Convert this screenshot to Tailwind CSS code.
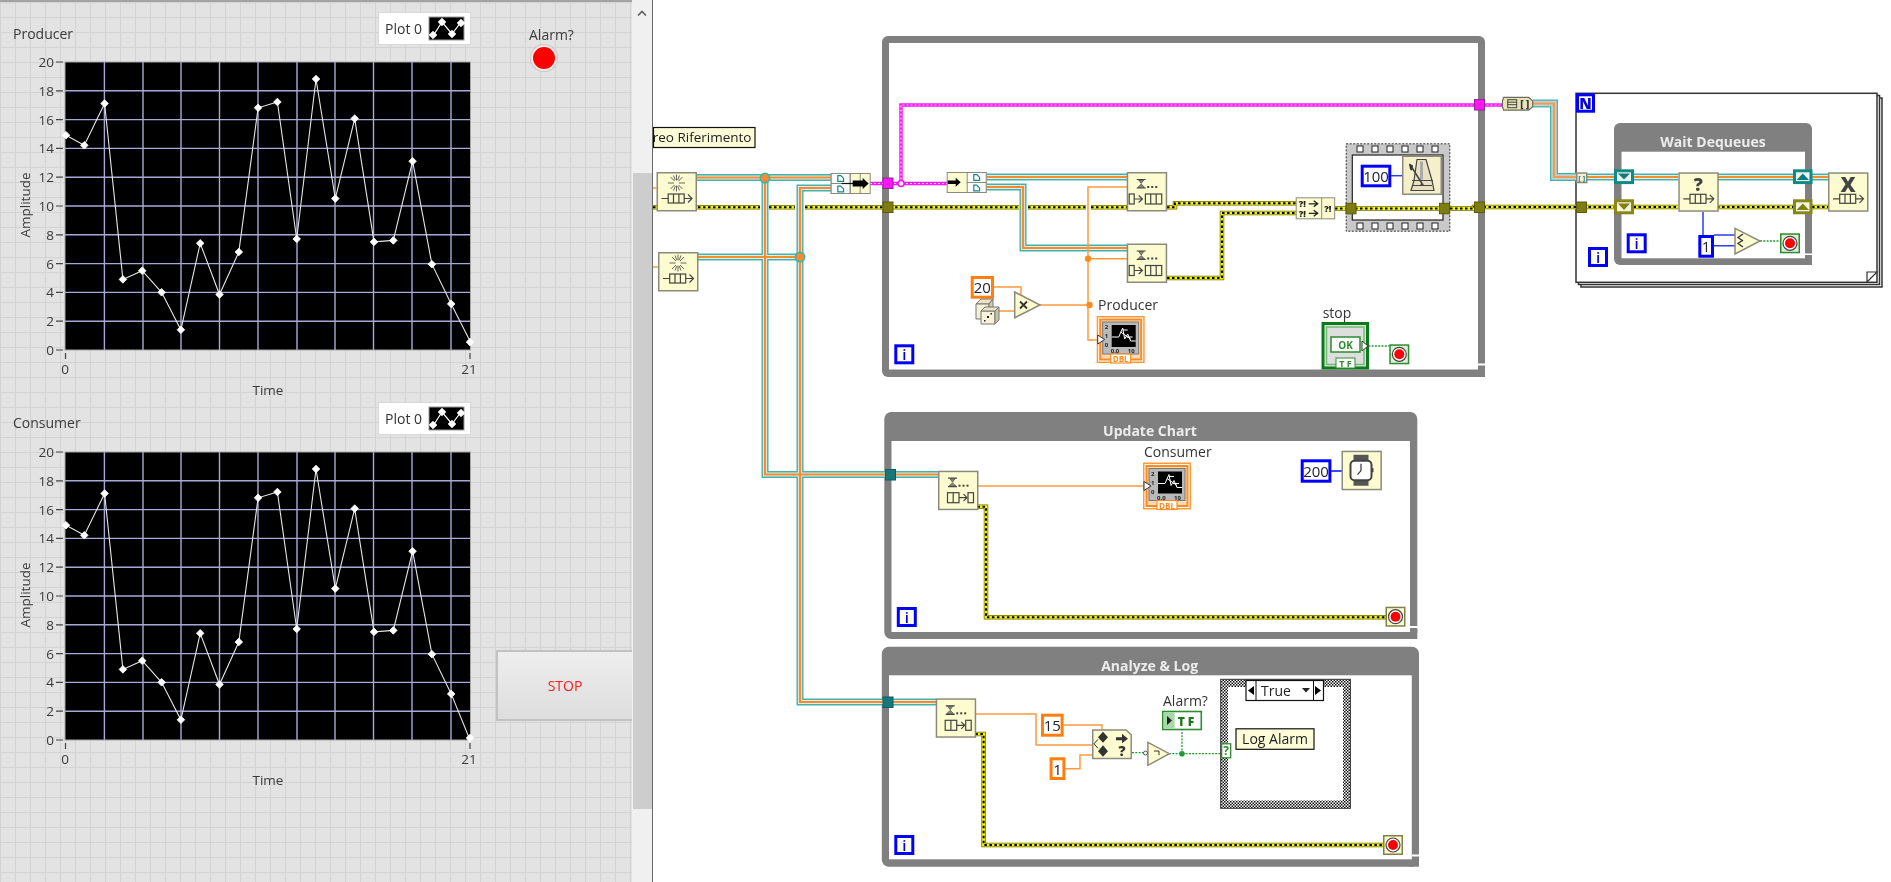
<!DOCTYPE html>
<html lang="en">
<head>
<meta charset="utf-8">
<title>Producer Consumer</title>
<script src="https://cdn.jsdelivr.net/npm/@tailwindcss/browser@4"></script>
</head>
<body class="bg-white font-['Open_Sans',sans-serif] overflow-hidden">

<svg class="absolute w-0 h-0" aria-hidden="true">
  <defs>
    <path id="mk" d="M0 -3.800L3.800 0L0 3.800L-3.800 0Z" fill="#fff" stroke="#fff" stroke-width=".8" stroke-linejoin="round"/>
    <g id="plotgrid">
      <rect x="65" y="17" width="405.500" height="288" fill="#000"/>
      <g stroke="#a9a9d6" stroke-width="1.400">
        <path d="M104.400 17V305M143 17V305M181 17V305M219.500 17V305M258 17V305M297 17V305M335 17V305M373.500 17V305M412 17V305M451 17V305"/>
        <path d="M65 45.800H470.500M65 74.600H470.500M65 103.400H470.500M65 132.200H470.500M65 161H470.500M65 189.800H470.500M65 218.600H470.500M65 247.400H470.500M65 276.200H470.500"/>
      </g>
      <rect x="65" y="17" width="405.500" height="288" fill="none" stroke="#a8a8a8" stroke-width="1"/>
      <g stroke="#444" stroke-width="1.200">
        <path d="M56 17H63M56 45.800H63M56 74.600H63M56 103.400H63M56 132.200H63M56 161H63M56 189.800H63M56 218.600H63M56 247.400H63M56 276.200H63M56 305H63"/>
        <path d="M65.500 308V314M470 308V314"/>
      </g>
      <g fill="#3a3a3a" font-size="13.500" text-anchor="end">
        <text x="54" y="22">20</text><text x="54" y="50.800">18</text><text x="54" y="79.600">16</text><text x="54" y="108.400">14</text><text x="54" y="137.200">12</text><text x="54" y="166">10</text><text x="54" y="194.800">8</text><text x="54" y="223.600">6</text><text x="54" y="252.400">4</text><text x="54" y="281.200">2</text><text x="54" y="310">0</text>
      </g>
      <g fill="#3a3a3a" font-size="13.500" text-anchor="middle">
        <text x="65" y="329">0</text><text x="469" y="329">21</text>
        <text x="268" y="350">Time</text>
        <text transform="translate(30 160) rotate(-90)">Amplitude</text>
      </g>
      <polyline fill="none" stroke="#e6e6e6" stroke-width="1.100" points="66,90.200 84.300,100.300 104.600,58.500 122.900,234.400 142.200,225.700 161.600,247.300 180.900,284.800 200.200,198.300 219.500,249.500 238.800,207 258.100,62.800 277.400,57 296.700,194 316,34 335.300,153.600 354.700,73.600 374,196.900 393.300,195.400 412.600,116.200 431.900,219.200 451.200,258.900"/>
      <use href="#mk" x="66" y="90.200"/><use href="#mk" x="84.300" y="100.300"/><use href="#mk" x="104.600" y="58.500"/><use href="#mk" x="122.900" y="234.400"/><use href="#mk" x="142.200" y="225.700"/><use href="#mk" x="161.600" y="247.300"/><use href="#mk" x="180.900" y="284.800"/><use href="#mk" x="200.200" y="198.300"/><use href="#mk" x="219.500" y="249.500"/><use href="#mk" x="238.800" y="207"/><use href="#mk" x="258.100" y="62.800"/><use href="#mk" x="277.400" y="57"/><use href="#mk" x="296.700" y="194"/><use href="#mk" x="316" y="34"/><use href="#mk" x="335.300" y="153.600"/><use href="#mk" x="354.700" y="73.600"/><use href="#mk" x="374" y="196.900"/><use href="#mk" x="393.300" y="195.400"/><use href="#mk" x="412.600" y="116.200"/><use href="#mk" x="431.900" y="219.200"/><use href="#mk" x="451.200" y="258.900"/>
    </g>
    <g id="swatch">
      <rect width="35" height="23" fill="#000" stroke="#9a9a9a" stroke-width="1"/>
      <polyline points="4,19 13,5 23,17 32,5" fill="none" stroke="#fff" stroke-width="1.200"/>
      <use href="#mk" x="4" y="18"/><use href="#mk" x="13" y="5"/><use href="#mk" x="23" y="17"/><use href="#mk" x="32" y="6"/>
    </g>

    <!-- diagram parts -->
    <pattern id="checks" width="3" height="3" patternUnits="userSpaceOnUse">
      <rect width="3" height="3" fill="#fff"/><rect width="1.500" height="1.500" fill="#111"/><rect x="1.500" y="1.500" width="1.500" height="1.500" fill="#111"/>
    </pattern>
    <rect id="nbox" x=".75" y=".75" width="39" height="38" fill="#fcfcd0" stroke="#8b8b7c" stroke-width="1.500"/>
    <g id="qglyph" fill="none" stroke="#444" stroke-width="1.200">
      <path d="M5 26.500H11.700M27.700 26.500H35M31.500 22.500L35.500 26.500L31.500 30.500"/>
      <rect x="11.700" y="22" width="16" height="9"/>
      <path d="M17 22V31M22.400 22V31"/>
    </g>
    <g id="star" stroke="#666" stroke-width="1">
      <path d="M20 2.500V8.500M20 13.500V19.500M11.500 11H17.500M22.500 11H28.500M14 5L18 9M26 5L22 9M14 17L18 13M26 17L22 13M17 3.500L18.800 8M23 3.500L21.200 8M17 18.500L18.800 14M23 18.500L21.200 14"/>
    </g>
    <g id="hg">
      <path d="M10 7.500H19M10 16H19" stroke="#444" stroke-width="1.200" fill="none"/>
      <path d="M12 8H17L14.500 11.500ZM14.500 12L18 15.500H11Z" fill="#8a8a78" stroke="#444" stroke-width=".7"/>
      <g fill="#444"><rect x="20.500" y="14" width="2" height="2"/><rect x="24.500" y="14" width="2" height="2"/><rect x="28.500" y="14" width="2" height="2"/></g>
    </g>
    <g id="deqA" fill="none" stroke="#444" stroke-width="1.200">
      <rect x="2.500" y="22" width="5" height="10"/>
      <path d="M7.500 27H15M12 23.500L15.700 27L12 30.500"/>
      <rect x="18.700" y="22" width="16.300" height="10"/>
      <path d="M24 22V32M29.500 22V32"/>
    </g>
    <g id="deqB" fill="none" stroke="#444" stroke-width="1.200">
      <rect x="9.500" y="22" width="11.500" height="10"/>
      <path d="M15.200 22V32M21 27H28.500M25.500 23.500L29 27L25.500 30.500"/>
      <rect x="30" y="22" width="5.500" height="10"/>
    </g>
    <g id="ibox">
      <rect x="1.500" y="1.500" width="17" height="17" fill="#fffff0" stroke="#0000ff" stroke-width="3"/>
      <text x="10" y="15.500" text-anchor="middle" font-size="15" font-weight="600" fill="#0000e0">i</text>
    </g>
    <g id="stopT">
      <rect x=".75" y=".75" width="18.500" height="18.500" fill="#fcfcd0" stroke="#80804a" stroke-width="1.500"/>
      <circle cx="10" cy="10" r="7" fill="#fff" stroke="#444" stroke-width="1.200"/>
      <circle cx="10" cy="10" r="5" fill="#f00"/>
    </g>
    <g id="stopG">
      <rect x=".75" y=".75" width="18.500" height="18.500" fill="#dff0d8" stroke="#2e8b2e" stroke-width="1.500"/>
      <circle cx="10" cy="10" r="7" fill="#fff" stroke="#444" stroke-width="1.200"/>
      <circle cx="10" cy="10" r="5" fill="#f00"/>
    </g>
    <g id="doc" fill="none" stroke="#0f8a86" stroke-width="1.200">
      <path d="M.6 .6H3.600L6.400 3.400V6.400H.6Z"/>
    </g>
    <g id="chartIcon">
      <rect x=".75" y=".75" width="46.500" height="45.500" fill="#fff" stroke="#ff9a3c" stroke-width="1.500"/>
      <rect x="3.500" y="3.500" width="41" height="40" fill="#ffd9b0" stroke="#ff8a1f" stroke-width="2"/>
      <rect x="6" y="6" width="36" height="32" fill="#b9b9b9" stroke="#777" stroke-width="1"/>
      <rect x="15" y="9" width="24" height="22" fill="#000"/>
      <path d="M15 21H22L26 12L28 23L31 18L34 25H39M24 16L34 23M26 14H31M30 21H36" fill="none" stroke="#fff" stroke-width="1"/>
      <g font-size="6" font-weight="700" fill="#222"><text x="8" y="13">2</text><text x="8" y="22">1</text><text x="8" y="31">0</text><text x="14" y="37">0.0</text><text x="31" y="37">10</text></g>
      <path d="M1 19L8 23.500L1 28Z" fill="#fff" stroke="#333" stroke-width="1"/>
      <rect x="14" y="38" width="20" height="9" fill="#fff" stroke="#ff8a1f" stroke-width="1.200"/>
      <text x="24" y="46" text-anchor="middle" font-size="8" font-weight="700" fill="#ff8a1f">DBL</text>
    </g>
    <g id="wireQ" fill="none">
      <path d="M765 177.500V474.500H938"/>
      <path d="M831 188H800V702H936"/>
      <path d="M698 257H800"/>
      <path d="M697 177.500H831"/>
      <path d="M987 177H1127"/>
      <path d="M987 187H1023V248H1127"/>
      <path d="M1587 177H1678M1717 177H1828"/>
    </g>
    <g id="wireE" fill="none">
      <path d="M653 207.300H760M769 207.300H795M805 207.300H1019M1028 207.300H1086M1091 207.300H1127"/>
      <path d="M1167 207.300H1175V203.300H1296"/>
      <path d="M1167 278H1222V213H1296"/>
      <path d="M1335 208.500H1474V207H1678M1717 207H1828"/>
      <path d="M977.500 506.700H986V617.300H1386"/>
      <path d="M975.400 734H983.600V845H1383"/>
    </g>
    <g id="wireP" fill="none">
      <path d="M870 183.500H947M901 183.500V105H1502"/>
    </g>
    <g id="wireA" fill="none"><path d="M1533 103.500H1554V177H1577"/></g>
  </defs>
</svg>

<div class="flex w-[1891px] h-[882px] overflow-hidden blur-[0.35px]">

  <!-- front panel -->
  <section class="flex w-[632px] h-full border-t-2 border-[#a3a3a3] bg-[#e3e3e3] bg-[linear-gradient(#d3d3d3_1.5px,transparent_1.5px),linear-gradient(90deg,#d3d3d3_1.5px,transparent_1.5px)] bg-[size:15px_15px]">
    <div class="flex flex-col w-[471px] shrink-0">
      <div class="pt-[10px]">
        <div class="flex items-end justify-between h-[33px]">
          <span class="pl-[13px] text-[14px] leading-[19px] text-[#3a3a3a] mb-[2px]">Producer</span>
          <div class="flex items-center gap-[6px] w-[93px] h-[33px] bg-white border border-[#d8d8d8] pl-[6px]">
            <span class="text-[14px] text-[#333]">Plot 0</span>
            <svg width="37" height="25" viewBox="-1 -1 37 25"><use href="#swatch"/></svg>
          </div>
        </div>
        <svg width="471" height="357" viewBox="0 0 471 357" class="block overflow-visible">
          <use href="#plotgrid"/>
          <polyline fill="none" stroke="#e6e6e6" stroke-width="1.100" points="451.200,258.900 470.500,297.100"/>
          <use href="#mk" x="470" y="297.100"/>
        </svg>
      </div>
      <div>
        <div class="flex items-end justify-between h-[33px]">
          <span class="pl-[13px] text-[14px] leading-[19px] text-[#3a3a3a] mb-[3px]">Consumer</span>
          <div class="flex items-center gap-[6px] w-[93px] h-[33px] bg-white border border-[#d8d8d8] pl-[6px]">
            <span class="text-[14px] text-[#333]">Plot 0</span>
            <svg width="37" height="25" viewBox="-1 -1 37 25"><use href="#swatch"/></svg>
          </div>
        </div>
        <svg width="471" height="357" viewBox="0 0 471 357" class="block overflow-visible">
          <use href="#plotgrid"/>
          <polyline fill="none" stroke="#e6e6e6" stroke-width="1.100" points="451.200,258.900 470,305"/>
          <use href="#mk" x="470" y="303"/>
        </svg>
      </div>
    </div>
    <div class="flex flex-col flex-1">
      <div class="flex flex-col items-start pl-[58px] pt-[23px]">
        <span class="text-[14px] leading-[19px] text-[#3a3a3a]">Alarm?</span>
        <span class="mt-[1px] ml-[2px] block w-[26px] h-[26px] rounded-full bg-[#ff0000] border-2 border-[#f2e8e8] shadow-[0_0_0_1px_#c8c8c8]"></span>
      </div>
      <button class="mt-[579px] ml-[25px] h-[71px] border-2 border-r-0 border-[#c2c2c2] bg-gradient-to-b from-[#eeeeee] to-[#dddddd] text-[14px] text-[#ff1a1a]">STOP</button>
    </div>
  </section>

  <!-- scrollbar -->
  <div class="flex flex-col w-[20px] h-full bg-[#f0f0f0]">
    <div class="h-[173px] flex justify-center pt-[10px]">
      <svg width="10" height="7" viewBox="0 0 10 7"><path d="M1 5.500L5 1.500L9 5.500" fill="none" stroke="#606060" stroke-width="1.700"/></svg>
    </div>
    <div class="h-[636px] ml-[1px] bg-[#cdcdcd]"></div>
  </div>
  <div class="w-[1px] h-full bg-[#6a6a6a]"></div>

  <!-- block diagram -->
  <main class="relative flex-1 h-full bg-white">
    <svg class="block w-full h-full" viewBox="653 0 1238 882">

      <!-- main while loop frame -->
      <rect x="882" y="36" width="603" height="341" rx="6" fill="#808080"/>
      <rect x="1475" y="367" width="10" height="10" fill="#808080"/>
      <rect x="889" y="43" width="589" height="326.500" fill="#fff"/>
      <rect x="1478" y="363.500" width="8" height="2" fill="#fff"/>

      <!-- update chart frame -->
      <rect x="884.300" y="412" width="533" height="227" rx="7" fill="#808080"/>
      <rect x="1407" y="629" width="10.300" height="10" fill="#808080"/>
      <rect x="891.500" y="441" width="518.500" height="191" fill="#fff"/>
      <rect x="1410" y="626" width="8" height="2" fill="#fff"/>
      <text x="1150" y="435.500" text-anchor="middle" font-size="14" font-weight="700" fill="#ececec">Update Chart</text>

      <!-- analyze frame -->
      <rect x="881.800" y="646.700" width="537.200" height="220" rx="7" fill="#808080"/>
      <rect x="1409" y="856.700" width="10" height="10" fill="#808080"/>
      <rect x="889" y="675.300" width="522.800" height="184" fill="#fff"/>
      <rect x="1411.800" y="854.500" width="8" height="2" fill="#fff"/>
      <text x="1149.600" y="670.500" text-anchor="middle" font-size="14" font-weight="700" fill="#ececec">Analyze &amp; Log</text>

      <!-- for loop frame -->
      <rect x="1581" y="98" width="301" height="189" fill="#fff" stroke="#333" stroke-width="1.500"/>
      <rect x="1578.500" y="95.500" width="301" height="189" fill="#fff" stroke="#333" stroke-width="1.500"/>
      <rect x="1576" y="93.300" width="301" height="189" fill="#fff" stroke="#333" stroke-width="1.500"/>
      <path d="M1867 282L1877 272H1867Z" fill="#fff" stroke="#333" stroke-width="1.200"/>

      <!-- wait dequeues frame -->
      <rect x="1614" y="123" width="198" height="142" rx="6" fill="#808080"/>
      <rect x="1802" y="255" width="10" height="10" fill="#808080"/>
      <rect x="1621.500" y="151.700" width="183.500" height="106.600" fill="#fff"/>
      <rect x="1805" y="253.500" width="8" height="1.500" fill="#fff"/>
      <text x="1713" y="146.500" text-anchor="middle" font-size="14" font-weight="700" fill="#ececec">Wait Dequeues</text>

      <!-- flat sequence -->
      <rect x="1346.200" y="143.800" width="103.600" height="87.400" fill="#c9c9c9" stroke="#333" stroke-width="1" stroke-dasharray="2 1.500"/>
      <rect x="1352.300" y="155" width="90.700" height="65" fill="#fff" stroke="#222" stroke-width="1.200"/>
      <g fill="#fff" stroke="#222" stroke-width="1">
        <rect x="1357" y="146" width="6" height="6"/><rect x="1372" y="146" width="6" height="6"/><rect x="1387" y="146" width="6" height="6"/><rect x="1402" y="146" width="6" height="6"/><rect x="1417" y="146" width="6" height="6"/><rect x="1432" y="146" width="6" height="6"/>
        <rect x="1357" y="223" width="6" height="6"/><rect x="1372" y="223" width="6" height="6"/><rect x="1387" y="223" width="6" height="6"/><rect x="1402" y="223" width="6" height="6"/><rect x="1417" y="223" width="6" height="6"/><rect x="1432" y="223" width="6" height="6"/>
      </g>

      <!-- error wires -->
      <use href="#wireE" stroke="#6f6f00" stroke-width="4.500"/>
      <use href="#wireE" stroke="#f4f400" stroke-width="3"/>
      <use href="#wireE" stroke="#000" stroke-width="2" stroke-dasharray="2.500 2.500"/>

      <!-- queue wires -->
      <path d="M698 257H800" stroke="#fff" stroke-width="9" fill="none"/>
      <use href="#wireQ" stroke="#41b3ad" stroke-width="7"/>
      <use href="#wireQ" stroke="#e4ece4" stroke-width="4.200"/>
      <use href="#wireQ" stroke="#f98b2e" stroke-width="2.200"/>
      <use href="#wireA" stroke="#41b3ad" stroke-width="8"/>
      <use href="#wireA" stroke="#c4d2cc" stroke-width="5.500"/>
      <use href="#wireA" stroke="#f09a5c" stroke-width="2.200"/>
      <circle cx="765" cy="178" r="5.500" fill="#41b3ad"/><circle cx="765" cy="178" r="3.800" fill="#f98b2e"/>
      <circle cx="800" cy="257" r="5.500" fill="#41b3ad"/><circle cx="800" cy="257" r="3.800" fill="#f98b2e"/>

      <!-- pink wire -->
      <use href="#wireP" stroke="#ff14ff" stroke-width="3.500"/>
      <use href="#wireP" stroke="#ffd4ff" stroke-width="1.200" stroke-dasharray="2 2"/>
      <circle cx="901" cy="183.500" r="3" fill="#fff" stroke="#ff14ff" stroke-width="1.500"/>

      <!-- orange wires -->
      <g fill="none" stroke="#ff9a3c" stroke-width="1.500">
        <path d="M1127 187H1088V340H1100"/>
        <path d="M1088 258.700H1127"/>
        <path d="M1040 305H1090"/>
        <path d="M994 287H1021V296"/>
        <path d="M999 311H1015"/>
        <path d="M977.500 486H1145"/>
        <path d="M975.400 714H1036V745H1092"/>
        <path d="M1063.600 725H1102V730"/>
        <path d="M1065.400 768.700H1080V755H1092"/>
      </g>
      <g fill="#ff8a1f"><circle cx="1088" cy="258.700" r="3.200"/><circle cx="1089.500" cy="305" r="3.200"/></g>

      <!-- blue wires -->
      <g fill="none" stroke="#2a3ff0" stroke-width="1.500">
        <path d="M1331 471H1342"/>
        <path d="M1703 212V235M1714 235H1735M1714 245.700H1735"/>
      </g>

      <!-- green wires -->
      <g fill="none" stroke="#1f9a3a" stroke-width="1.300" stroke-dasharray="2 1.300">
        <path d="M1365 346H1389"/>
        <path d="M1760 241H1780"/>
        <path d="M1132 752.700H1146M1169 753.700H1222M1182 753.700V730"/>
      </g>
      <circle cx="1182" cy="753.700" r="2.800" fill="#1f9a3a"/>

      <!-- tunnels -->
      <g fill="#7c7c10" stroke="#5c5c08" stroke-width="1">
        <rect x="883" y="202" width="10" height="10.500"/>
        <rect x="1474.500" y="202" width="10" height="10.500"/>
        <rect x="1576.500" y="202" width="10" height="10.500"/>
        <rect x="1346" y="203.300" width="10" height="10.500"/>
        <rect x="1439.500" y="203.300" width="10" height="10.500"/>
      </g>
      <g fill="#ff14ff" stroke="#8a2a8a" stroke-width="1">
        <rect x="883" y="178" width="10" height="10.500"/>
        <rect x="1474.500" y="99.500" width="10" height="10.500"/>
      </g>
      <g fill="#16787a" stroke="#0f5c5c" stroke-width="1">
        <rect x="885.500" y="469.500" width="10" height="10.500"/>
        <rect x="883" y="697" width="10" height="10.500"/>
      </g>

      <!-- obtain queue nodes -->
      <g transform="translate(656.500 172)"><use href="#nbox"/><use href="#star"/><use href="#qglyph"/></g>
      <g transform="translate(658 252)"><use href="#nbox"/><use href="#star"/><use href="#qglyph"/></g>
      <path d="M653 188H657M653 267H658" stroke="#ff9a3c" stroke-width="1.500"/>

      <!-- comment label -->
      <rect x="653.500" y="127.500" width="101.500" height="20" fill="#fcfcd8" stroke="#111" stroke-width="1.200"/>
      <text x="751.500" y="142" text-anchor="end" font-size="13.500" fill="#222">reo Riferimento</text>

      <!-- build array -->
      <g transform="translate(830.700 173)">
        <rect x=".5" y=".5" width="39" height="20" fill="#fcfcd0" stroke="#8b8b7c" stroke-width="1"/>
        <rect x=".5" y=".5" width="19" height="10" fill="#fff" stroke="#8b8b7c" stroke-width="1"/>
        <rect x=".5" y="10.500" width="19" height="10" fill="#fff" stroke="#8b8b7c" stroke-width="1"/>
        <path d="M29.500 .5V20.500M19.500 .5V20.500" stroke="#8b8b7c"/>
        <use href="#doc" x="6.500" y="2"/><use href="#doc" x="6.500" y="12.500"/>
        <path d="M11 10.500H24" stroke="#111" stroke-width="1.200"/>
        <path d="M22 7.500H32V5L38 10.500L32 16V13.500H22Z" fill="#000"/>
      </g>

      <!-- index array -->
      <g transform="translate(946.700 172)">
        <rect x=".5" y=".5" width="39" height="20" fill="#fcfcd0" stroke="#8b8b7c" stroke-width="1"/>
        <rect x="20.500" y=".5" width="19" height="10" fill="#fff" stroke="#8b8b7c" stroke-width="1"/>
        <rect x="20.500" y="10.500" width="19" height="10" fill="#fff" stroke="#8b8b7c" stroke-width="1"/>
        <use href="#doc" x="26.500" y="2"/><use href="#doc" x="26.500" y="12.500"/>
        <path d="M1 8.500H9V5.800L14 10.300L9 14.800V12H1Z" fill="#000"/>
      </g>

      <!-- dequeue nodes -->
      <g transform="translate(1126.700 172)"><use href="#nbox"/><use href="#hg"/><use href="#deqA"/></g>
      <g transform="translate(1126.700 243.500)"><use href="#nbox"/><use href="#hg"/><use href="#deqA"/></g>
      <g transform="translate(938 470.700)"><use href="#nbox"/><use href="#hg"/><use href="#deqB"/></g>
      <g transform="translate(935.700 698.300)"><use href="#nbox"/><use href="#hg"/><use href="#deqB"/></g>

      <!-- constant 20, dice, multiply -->
      <rect x="972.200" y="277.500" width="20.300" height="19.700" fill="#fff" stroke="#ff7f0e" stroke-width="3"/>
      <text x="982.300" y="293" text-anchor="middle" font-size="15" fill="#223">20</text>
      <g stroke="#777" stroke-width="1">
        <path d="M976 304L981 299H993L989 304Z" fill="#e8e4c4"/>
        <path d="M976 304H989V319H976Z" fill="#f4f0d4"/>
        <path d="M989 304L993 299V312L989 317Z" fill="#d0ccac"/>
        <path d="M981 311H995V324H981Z" fill="#f8f4dc"/>
        <path d="M981 311L985 307H999L995 311Z" fill="#e8e4c4"/>
        <path d="M995 311L999 307V320L995 324Z" fill="#c8c4a4"/>
      </g>
      <g fill="#222"><rect x="987" y="316" width="2" height="2"/><rect x="984" y="320" width="1.500" height="1.500"/><rect x="990.500" y="313" width="1.500" height="1.500"/></g>
      <path d="M1014.700 292L1040 305L1014.700 317.700Z" fill="#fcfcd0" stroke="#8b8b7c" stroke-width="1.500"/>
      <path d="M1020 301.500L1027 308.500M1027 301.500L1020 308.500" stroke="#333" stroke-width="1.800"/>

      <!-- producer chart terminal -->
      <text x="1098" y="310" font-size="14" fill="#333">Producer</text>
      <use href="#chartIcon" x="1096.700" y="316"/>

      <!-- merge errors -->
      <g transform="translate(1295.700 197.300)">
        <rect x=".5" y=".5" width="38.500" height="21" fill="#fcfcd0" stroke="#8b8b7c" stroke-width="1"/>
        <path d="M26 .5V21.500" stroke="#8b8b7c"/>
        <g font-size="9" font-weight="800" fill="#222"><text x="3" y="10">?!</text><text x="3" y="19.500">?!</text><text x="28.500" y="14.500">?!</text></g>
        <path d="M13 6.500H21M18 3.500L22 6.500L18 9.500M13 16H21M18 13L22 16L18 19" fill="none" stroke="#222" stroke-width="1.300"/>
      </g>

      <!-- flat sequence contents -->
      <rect x="1362.200" y="166.200" width="27.600" height="19.600" fill="#fff" stroke="#0000ff" stroke-width="3"/>
      <text x="1376" y="181.500" text-anchor="middle" font-size="15" fill="#223">100</text>
      <path d="M1391 175.700H1402" stroke="#2a3ff0" stroke-width="1.500"/>
      <g transform="translate(1402 155.500)">
        <rect x=".75" y=".75" width="38.500" height="38" fill="#f6efcc" stroke="#8b8b7c" stroke-width="1.500"/>
        <path d="M15 4H24L30 25L32 35H9L12 25Z" fill="#e8e0c0" stroke="#444" stroke-width="1.200"/>
        <path d="M10 25H31M11 30H30" stroke="#444" stroke-width="1.200"/>
        <path d="M19.500 6V24" stroke="#aaa" stroke-width="3"/>
        <path d="M8 9L20 28" stroke="#444" stroke-width="1.500"/>
        <path d="M7 8L11 10L10 15L8 14Z" fill="#333"/>
        <circle cx="20" cy="29" r="1.500" fill="#444"/>
      </g>

      <!-- stop -->
      <text x="1322.700" y="318" font-size="14" fill="#333">stop</text>
      <rect x="1323" y="323.500" width="44.500" height="44.500" fill="#e0e0e0" stroke="#0b7a1a" stroke-width="3"/>
      <rect x="1326.500" y="327" width="37.500" height="37.500" fill="#dedede" stroke="#6fbf70" stroke-width="1.500"/>
      <rect x="1331" y="337" width="29" height="15" fill="#fff" stroke="#2e8b2e" stroke-width="1.500"/>
      <text x="1345.500" y="349" text-anchor="middle" font-size="10" font-weight="700" fill="#2e8b2e">OK</text>
      <rect x="1336" y="358" width="19" height="10" fill="#fff" stroke="#2e8b2e" stroke-width="1"/>
      <text x="1345.500" y="367" text-anchor="middle" font-size="9" font-weight="700" fill="#2e8b2e">T F</text>
      <path d="M1362 341L1368 346L1362 351Z" fill="#fff" stroke="#333" stroke-width="1"/>
      <use href="#stopG" x="1389.300" y="344.300"/>

      <!-- i terminals -->
      <use href="#ibox" x="894.300" y="344.300"/>
      <use href="#ibox" x="896.800" y="607"/>
      <use href="#ibox" x="894.300" y="835"/>
      <use href="#ibox" x="1588" y="247"/>
      <use href="#ibox" x="1626.700" y="233.300"/>

      <!-- consumer -->
      <text x="1144" y="457" font-size="14" fill="#333">Consumer</text>
      <use href="#chartIcon" x="1143" y="462.500"/>
      <use href="#stopT" x="1385.500" y="606.700"/>
      <rect x="1302.200" y="460.800" width="27.700" height="20.400" fill="#fff" stroke="#0000ff" stroke-width="3"/>
      <text x="1316" y="476.500" text-anchor="middle" font-size="15" fill="#223">200</text>
      <path d="M1331 471H1342" stroke="#2a3ff0" stroke-width="1.500"/>
      <g transform="translate(1341.500 450.700)">
        <rect x=".75" y=".75" width="38.900" height="38.100" fill="#fcfcd0" stroke="#8b8b7c" stroke-width="1.500"/>
        <path d="M12 4H27V10H12ZM12 29H27V35H12Z" fill="#555"/>
        <rect x="9" y="10" width="21" height="19.500" rx="4" fill="#fff" stroke="#444" stroke-width="2"/>
        <rect x="30" y="17.500" width="2" height="4" fill="#444"/>
        <path d="M19.500 20V13M19.500 20L16 24" stroke="#333" stroke-width="1.200"/>
      </g>

      <!-- analyze -->
      <rect x="1042.500" y="715.200" width="19.600" height="20" fill="#fff" stroke="#ff7f0e" stroke-width="3"/>
      <text x="1052.300" y="731" text-anchor="middle" font-size="15" fill="#223">15</text>
      <rect x="1051.100" y="758.800" width="12.800" height="19.700" fill="#fff" stroke="#ff7f0e" stroke-width="3"/>
      <text x="1057.500" y="774.500" text-anchor="middle" font-size="15" fill="#223">1</text>
      <g transform="translate(1092 729.300)">
        <path d="M.75 .75H34L39.200 5.500V29.200H.75Z" fill="#fcfcd0" stroke="#8b8b7c" stroke-width="1.500"/>
        <path d="M11 2.500L16 8L11 13.500L6 8ZM11 16L16 22L11 27.500L6 22Z" fill="#333"/>
        <path d="M2 14.500L6 10M2 14.500L6 19" stroke="#333" fill="none" stroke-width="1"/>
        <path d="M24 8H30V4.500L36 9.500L30 14V11H24Z" fill="#333"/>
        <text x="30" y="27" text-anchor="middle" font-size="14" font-weight="800" fill="#333">?</text>
      </g>
      <path d="M1147.900 742.300L1169.300 753.700L1147.900 765.300Z" fill="#fcfcd0" stroke="#8b8b7c" stroke-width="1.500"/>
      <path d="M1154 751H1159V755" fill="none" stroke="#333" stroke-width="1"/>
      <circle cx="1145.500" cy="753" r="2" fill="#fff" stroke="#555" stroke-width="1"/>

      <text x="1163" y="705.500" font-size="14" fill="#333">Alarm?</text>
      <rect x="1162.800" y="711.500" width="38.500" height="18" fill="#fff" stroke="#2e8b2e" stroke-width="1.600"/>
      <rect x="1163.600" y="712.300" width="11" height="16.400" fill="#a8d8a8"/>
      <path d="M1167 716L1172 720.500L1167 725Z" fill="#222"/>
      <text x="1186" y="725.500" text-anchor="middle" font-size="12" font-weight="800" fill="#1a7a1a">T F</text>

      <!-- case structure -->
      <rect x="1220.700" y="679.300" width="129.700" height="129" fill="url(#checks)" stroke="#333" stroke-width="1"/>
      <rect x="1228" y="687" width="115" height="113.500" fill="#fff"/>
      <rect x="1246" y="680.500" width="77.500" height="20" fill="#fff" stroke="#111" stroke-width="1.200"/>
      <path d="M1256 680.500V700.500M1313.500 680.500V700.500" stroke="#111"/>
      <path d="M1254 686V695L1248 690.500ZM1315 686V695L1321 690.500Z" fill="#000"/>
      <text x="1261" y="695.500" font-size="14" fill="#222">True</text>
      <path d="M1302 688H1310L1306 692.500Z" fill="#222"/>
      <rect x="1221.700" y="743.800" width="9" height="14" fill="#fff" stroke="#2e8b2e" stroke-width="1.300"/>
      <text x="1226.200" y="755" text-anchor="middle" font-size="12" font-weight="700" fill="#2e8b2e">?</text>
      <rect x="1236" y="728.800" width="78" height="20.500" fill="#fcfcd8" stroke="#111" stroke-width="1.200"/>
      <text x="1275" y="744" text-anchor="middle" font-size="14" fill="#222">Log Alarm</text>
      <use href="#stopT" x="1383" y="835"/>

      <!-- array to for loop -->
      <g transform="translate(1501.700 96.700)">
        <path d="M2 .75H27L31 4V10L27 13.500H2L.75 10V4Z" fill="#e8e4b8" stroke="#6c6c5c" stroke-width="1.200"/>
        <rect x="6" y="3" width="9" height="8" fill="none" stroke="#444" stroke-width="1"/>
        <path d="M6 5.500H15M6 8H15" stroke="#444" stroke-width="1"/>
        <text x="23" y="11" text-anchor="middle" font-size="10" font-weight="800" fill="#333">[ ]</text>
      </g>
      <g transform="translate(1576 172.300)">
        <rect x=".75" y=".75" width="10" height="9.500" fill="#f4f0d0" stroke="#8b8b7c" stroke-width="1.500"/>
        <text x="5.700" y="8.800" text-anchor="middle" font-size="7.500" font-weight="700" fill="#0f8a86">[ ]</text>
      </g>
      <rect x="1577.500" y="94.800" width="16" height="16.400" fill="#fffff0" stroke="#0000ff" stroke-width="3"/>
      <text x="1585.500" y="108.500" text-anchor="middle" font-size="15" font-weight="800" fill="#0000e0">N</text>

      <!-- shift registers -->
      <g stroke-width="3" fill="#eef4f2">
        <rect x="1615.500" y="170.800" width="17" height="11.800" stroke="#0f8a86"/>
        <rect x="1794.500" y="170.800" width="16.500" height="11.800" stroke="#0f8a86"/>
      </g>
      <g stroke-width="3" fill="#f4f4e0">
        <rect x="1615.500" y="200.800" width="17" height="12" stroke="#86861a"/>
        <rect x="1794.500" y="200.800" width="16.500" height="12" stroke="#86861a"/>
      </g>
      <path d="M1618 173.500H1630L1624 179.500Z" fill="#0f7a7a"/>
      <path d="M1618 203.500H1630L1624 210Z" fill="#808010"/>
      <path d="M1796.500 180H1809L1802.800 173.500Z" fill="#0f7a7a"/>
      <path d="M1796.500 210H1809L1802.800 203.500Z" fill="#808010"/>

      <!-- preview, release -->
      <g transform="translate(1678.300 172.300)">
        <use href="#nbox"/>
        <text x="20" y="19" text-anchor="middle" font-size="18" font-weight="800" fill="#444">?</text>
        <use href="#qglyph"/>
      </g>
      <g transform="translate(1828 172.300)">
        <use href="#nbox"/>
        <text x="20" y="19.500" text-anchor="middle" font-size="21" font-weight="800" fill="#444">X</text>
        <use href="#qglyph"/>
      </g>

      <rect x="1699.800" y="236.500" width="12.700" height="19.700" fill="#fff" stroke="#0000ff" stroke-width="3"/>
      <text x="1706" y="252" text-anchor="middle" font-size="15" fill="#223">1</text>
      <path d="M1735 228.300L1760 241L1735 254Z" fill="#fcfcd0" stroke="#8b8b7c" stroke-width="1.500"/>
      <path d="M1743 234L1738 237.500L1743 241M1743 240L1738 243.500L1743 247" fill="none" stroke="#333" stroke-width="1.300"/>
      <use href="#stopG" x="1780" y="233.300"/>
    </svg>
  </main>
</div>
</body>
</html>
